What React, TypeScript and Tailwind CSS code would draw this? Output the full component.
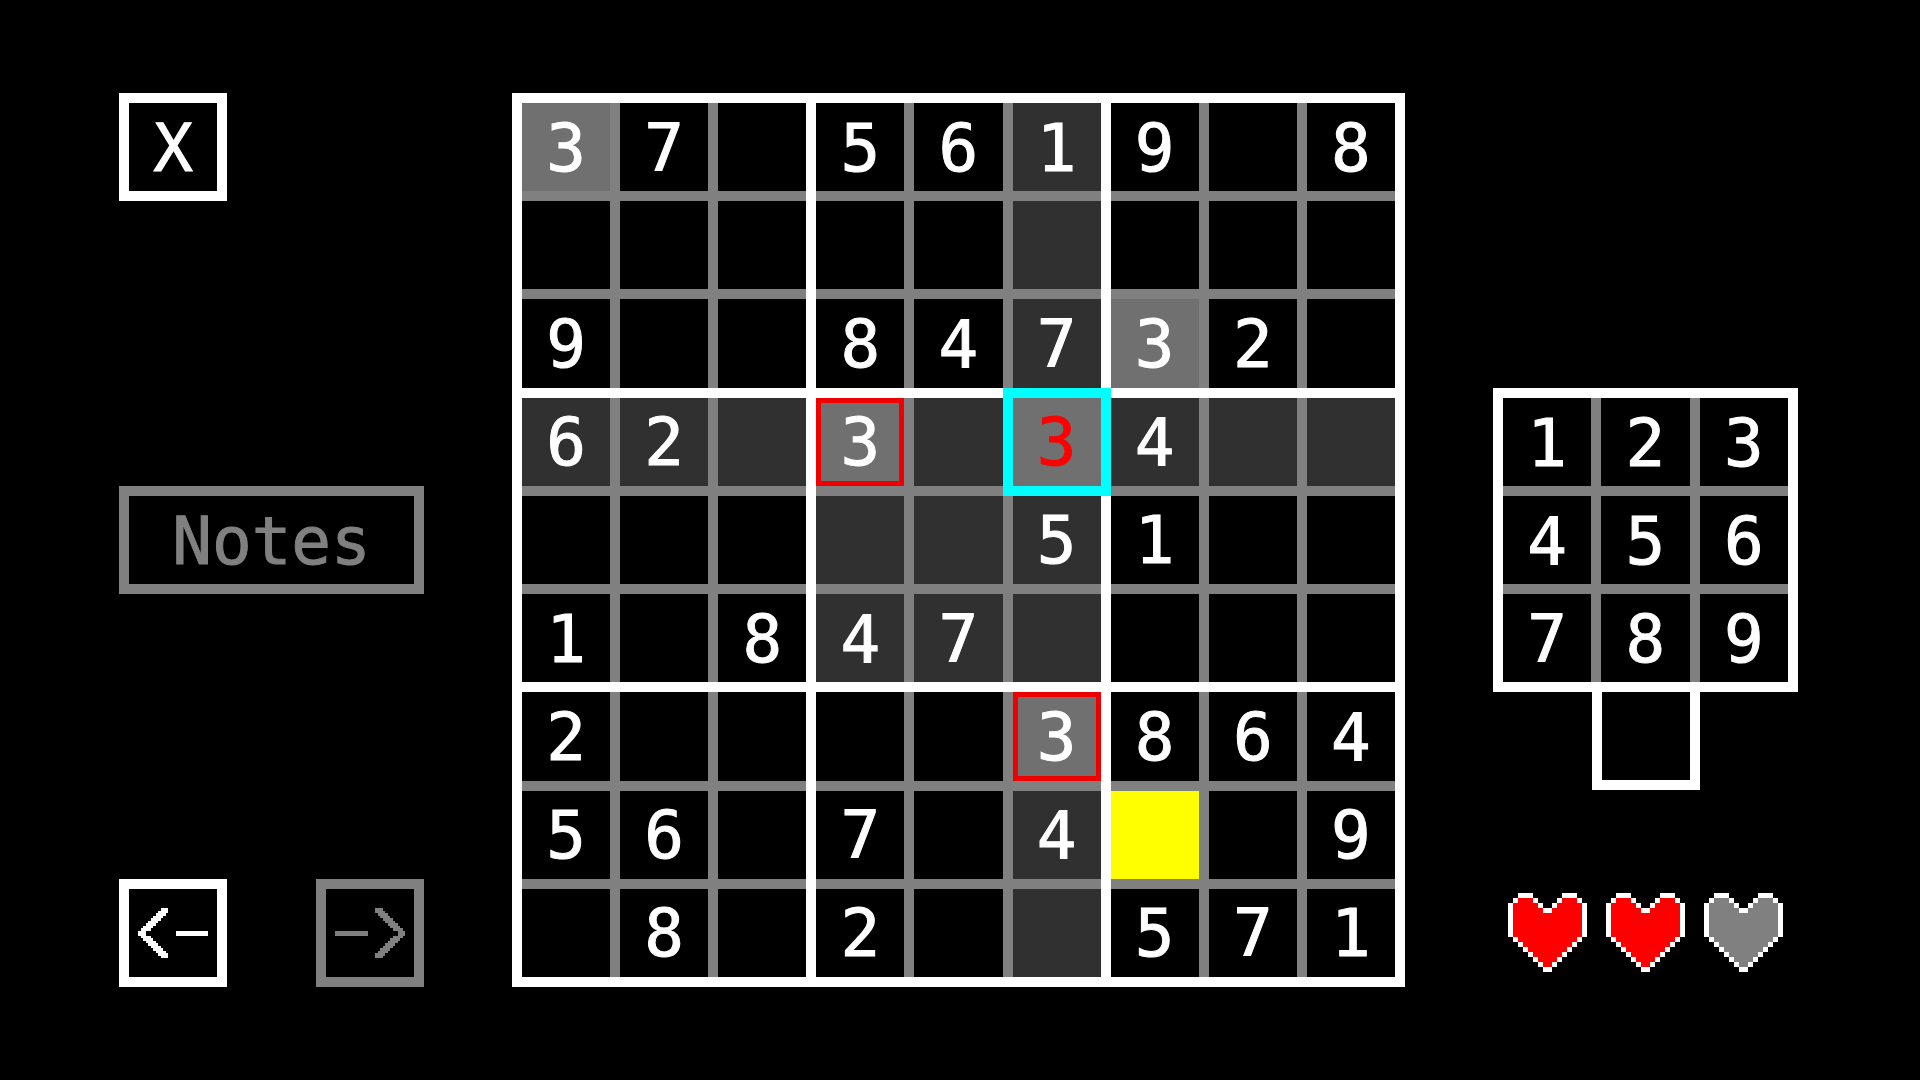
import { useState } from 'react';
import clsx from 'clsx';

interface Cell {
  row: number;
  col: number;
}

const START = [
  '37.5619.8',
  '.........',
  '9..84732.',
  '62.3.34..',
  '.....51..',
  '1.847....',
  '2....3864',
  '56.7.4..9',
  '.8.2..571',
];

const HINT: Cell = { row: 7, col: 6 };
const WRONG: Cell = { row: 3, col: 5 };
const LIVES = 2;
const NINE = [0, 1, 2, 3, 4, 5, 6, 7, 8];

// w = outline, f = fill
const HEART = [
  '..www......www..',
  '.wfffw....wfffw.',
  'wfffffw..wfffffw',
  'wffffffwwffffffw',
  'wffffffffffffffw',
  'wffffffffffffffw',
  'wffffffffffffffw',
  'wffffffffffffffw',
  'wffffffffffffffw',
  '.wffffffffffffw.',
  '..wffffffffffw..',
  '...wffffffffw...',
  '....wffffffw....',
  '.....wffffw.....',
  '......wffw......',
  '.......ww.......',
];

const same = (a: Cell, b: Cell) => a.row === b.row && a.col === b.col;
const boxOf = (c: Cell) => Math.floor(c.row / 3) * 3 + Math.floor(c.col / 3);
const sees = (a: Cell, b: Cell) => a.row === b.row || a.col === b.col || boxOf(a) === boxOf(b);

function Heart({ full }: { full: boolean }) {
  return (
    <svg viewBox="0 0 16 16" shapeRendering="crispEdges" className={clsx('w-[79px] h-[79px]', full ? 'text-[#ff0000]' : 'text-[#808080]')}>
      {HEART.map((line, y) =>
        line.split('').map((ch, x) => ch !== '.' && (
          <rect key={`${x}-${y}`} x={x} y={y} width="1" height="1" fill={ch === 'w' ? '#fff' : 'currentColor'} />
        ))
      )}
    </svg>
  );
}

function ArrowIcon({ className }: { className?: string }) {
  return (
    <svg viewBox="0 0 28 20" shapeRendering="crispEdges" fill="currentColor" className={clsx('w-[70px] h-[50px]', className)}>
      {Array.from({ length: 20 }, (_, i) => (
        <rect key={i} x={i < 10 ? 9 - i : i - 10} y={i} width={[0, 9, 10, 19].includes(i) ? 3 : 4} height="1" />
      ))}
      <rect x="15" y="9" width="13" height="2" />
    </svg>
  );
}

export default function App() {
  const [grid, setGrid] = useState(START);
  const [selected, setSelected] = useState<Cell>(WRONG);
  const [notes, setNotes] = useState(false);

  const current = grid[selected.row][selected.col];

  const handleDigit = (digit: string) => {
    if (START[selected.row][selected.col] !== '.') return;
    setGrid(prev => prev.map((line, r) => (r === selected.row ? line.slice(0, selected.col) + digit + line.slice(selected.col + 1) : line)));
  };

  const renderCell = (cell: Cell) => {
    const value = grid[cell.row][cell.col];
    const isSelected = same(cell, selected);
    const match = value !== '.' && value === current;
    const conflict = match && !isSelected && sees(cell, selected);

    let cls = 'flex items-center justify-center min-w-0 min-h-0 pt-[3px] ';
    if (same(cell, HINT)) cls += 'bg-[#ffff00] ';
    else if (match) cls += 'bg-[#707070] ';
    else if (sees(cell, selected)) cls += 'bg-[#303030] ';
    else cls += 'bg-black ';
    if (conflict) cls += 'border-5 border-[#ee0000] ';
    if (isSelected) cls += 'relative z-10 outline-10 outline-[#00ffff] ';
    if (same(cell, WRONG)) cls += 'text-[#ff0000]';

    return (
      <button key={cell.col + cell.row * 9} onClick={() => setSelected(cell)} aria-label={`Row ${cell.row + 1}, column ${cell.col + 1}`} className={cls}>
        {value !== '.' && value}
      </button>
    );
  };

  return (
    <main className="min-h-screen flex gap-[88px] pl-[119px] pr-[122px] py-[93px] bg-black text-white font-['DejaVu_Sans_Mono',monospace] text-[66px] leading-none [-webkit-text-stroke:1px]">
      {/* Menu */}
      <div className="w-[305px] shrink-0 flex flex-col justify-between items-start">
        <button className="w-[108px] h-[108px] pt-[3px] border-10 border-white flex items-center justify-center">X</button>
        <button
          onClick={() => setNotes(!notes)}
          aria-pressed={notes}
          className={clsx('w-full h-[108px] pt-[3px] border-10 flex items-center justify-center', notes ? 'border-white text-white' : 'border-[#808080] text-[#808080]')}
        >
          Notes
        </button>
        <div className="w-full flex justify-between">
          <button aria-label="Undo" className="w-[108px] h-[108px] border-10 border-white flex items-center justify-center">
            <ArrowIcon />
          </button>
          <button aria-label="Redo" disabled className="w-[108px] h-[108px] border-10 border-[#808080] text-[#808080] flex items-center justify-center">
            <ArrowIcon className="-scale-x-100" />
          </button>
        </div>
      </div>

      {/* Board */}
      <div className="flex-1 min-w-0 grid grid-cols-3 grid-rows-3 gap-[10px] border-10 border-white bg-white">
        {NINE.map(box => (
          <div key={box} className="grid grid-cols-3 grid-rows-3 gap-[10px] bg-[#808080] min-h-0">
            {NINE.map(i => renderCell({
              row: Math.floor(box / 3) * 3 + Math.floor(i / 3),
              col: (box % 3) * 3 + (i % 3),
            }))}
          </div>
        ))}
      </div>

      {/* Keypad and lives */}
      <div className="w-[305px] shrink-0 flex flex-col justify-end items-center pb-[15px]">
        <div className="w-full grid grid-cols-3 gap-[10px] border-10 border-white bg-[#808080]">
          {NINE.map(i => (
            <button key={i} onClick={() => handleDigit(String(i + 1))} className="h-[88px] pt-[3px] bg-black flex items-center justify-center">
              {i + 1}
            </button>
          ))}
        </div>
        <button aria-label="Erase" onClick={() => handleDigit('.')} className="w-[108px] h-[98px] border-10 border-t-0 border-white" />
        <div className="flex gap-[19px] mt-[103px]">
          {[0, 1, 2].map(i => <Heart key={i} full={i < LIVES} />)}
        </div>
      </div>
    </main>
  );
}
